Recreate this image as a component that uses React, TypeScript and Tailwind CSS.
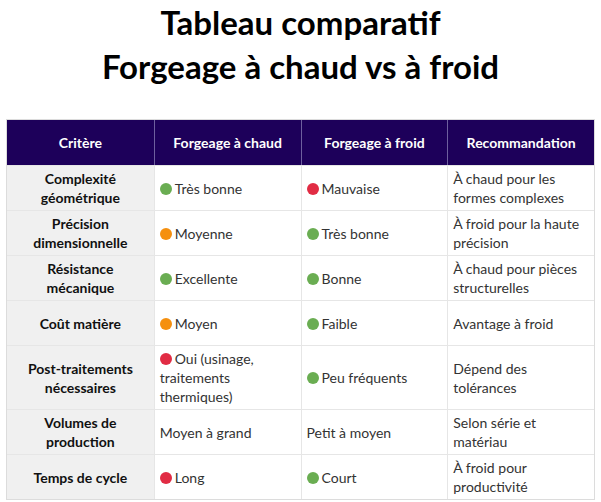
const DOT: Record<string, string> = {
  g: 'bg-[#6aad52]',
  o: 'bg-[#f5900f]',
  r: 'bg-[#e12c44]',
}

type Cell = { text: string; dot?: 'g' | 'o' | 'r' }

interface Row {
  critere: string
  chaud: Cell
  froid: Cell
  reco: string
}

const rows: Row[] = [
  { critere: 'Complexité géométrique', chaud: { text: 'Très bonne', dot: 'g' }, froid: { text: 'Mauvaise', dot: 'r' }, reco: 'À chaud pour les formes complexes' },
  { critere: 'Précision dimensionnelle', chaud: { text: 'Moyenne', dot: 'o' }, froid: { text: 'Très bonne', dot: 'g' }, reco: 'À froid pour la haute précision' },
  { critere: 'Résistance mécanique', chaud: { text: 'Excellente', dot: 'g' }, froid: { text: 'Bonne', dot: 'g' }, reco: 'À chaud pour pièces structurelles' },
  { critere: 'Coût matière', chaud: { text: 'Moyen', dot: 'o' }, froid: { text: 'Faible', dot: 'g' }, reco: 'Avantage à froid' },
  { critere: 'Post-traitements nécessaires', chaud: { text: 'Oui (usinage, traitements thermiques)', dot: 'r' }, froid: { text: 'Peu fréquents', dot: 'g' }, reco: 'Dépend des tolérances' },
  { critere: 'Volumes de production', chaud: { text: 'Moyen à grand' }, froid: { text: 'Petit à moyen' }, reco: 'Selon série et matériau' },
  { critere: 'Temps de cycle', chaud: { text: 'Long', dot: 'r' }, froid: { text: 'Court', dot: 'g' }, reco: 'À froid pour productivité' },
]

function ValueCell({ cell }: { cell: Cell }) {
  return (
    <div className="flex items-center border-l border-[#e6e6e6] bg-white px-[5px] py-[3px]">
      <div className="leading-[19px]">
        {cell.dot && (
          <span className={`mr-[3px] inline-block h-[12px] w-[12px] rounded-full align-[-1px] ${DOT[cell.dot]}`} />
        )}
        {cell.text}
      </div>
    </div>
  )
}

export default function App() {
  return (
    <div className="h-[502px] w-[601px] bg-white font-['Lato',sans-serif] text-[#333]">
      <h1 className="text-center text-[33px] font-bold leading-[44px] text-black">
        Tableau comparatif
        <br />
        Forgeage à chaud vs à froid
      </h1>

      <div className="ml-[6px] mt-[31px] w-[589px] border border-[#dcdcdc] text-[14px]">
        <div className="grid min-h-[45px] grid-cols-4 bg-[#1d005a] font-bold text-white">
          <div className="flex items-center justify-center">Critère</div>
          <div className="flex items-center justify-center border-l border-[#6e5f9e]">Forgeage à chaud</div>
          <div className="flex items-center justify-center border-l border-[#6e5f9e]">Forgeage à froid</div>
          <div className="flex items-center justify-center border-l border-[#6e5f9e]">Recommandation</div>
        </div>

        {rows.map((row) => (
          <div key={row.critere} className="grid min-h-[45px] grid-cols-4 border-t border-[#e6e6e6]">
            <div className="flex items-center justify-center bg-[#f0f0f0] px-[8px] py-[3px] text-center font-bold leading-[19px] text-[#111]">
              {row.critere}
            </div>
            <ValueCell cell={row.chaud} />
            <ValueCell cell={row.froid} />
            <ValueCell cell={{ text: row.reco }} />
          </div>
        ))}
      </div>
    </div>
  )
}
